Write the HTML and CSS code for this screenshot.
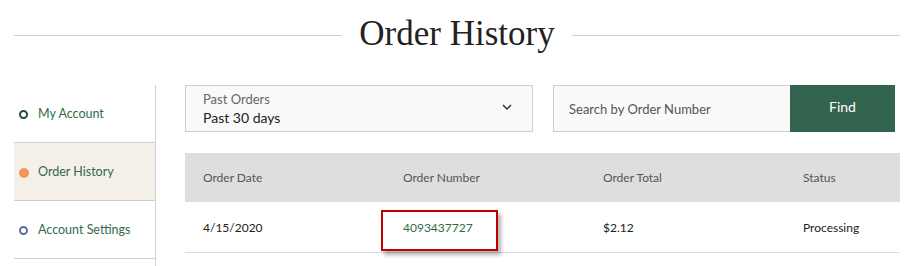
FILE: index.html
```html
<!DOCTYPE html>
<html lang="en">
<head>
<meta charset="utf-8">
<title>Order History</title>
<link rel="stylesheet" href="styles.css">
</head>
<body>
<div class="page">
  <header class="title-row">
    <span class="rule"></span>
    <h1 class="title">Order History</h1>
    <span class="rule"></span>
  </header>
  <div class="main">
    <nav class="sidebar">
      <a class="nav-item" href="#"><span class="dot dot-account"></span>My Account</a>
      <a class="nav-item active" href="#"><span class="dot dot-history"></span>Order History</a>
      <a class="nav-item" href="#"><span class="dot dot-settings"></span>Account Settings</a>
    </nav>
    <section class="content">
      <div class="controls">
        <div class="select">
          <div class="select-text">
            <span class="select-label">Past Orders</span>
            <span class="select-value">Past 30 days</span>
          </div>
          <svg class="chevron" width="10" height="6" viewBox="0 0 10 6"><path d="M1 1 L5 5 L9 1" fill="none" stroke="#333" stroke-width="1.5"/></svg>
        </div>
        <div class="search">
          <span class="search-input">Search by Order Number</span>
          <button class="find">Find</button>
        </div>
      </div>
      <div class="table">
        <div class="thead">
          <div class="cell c1">Order Date</div>
          <div class="cell c2">Order Number</div>
          <div class="cell c3">Order Total</div>
          <div class="cell c4">Status</div>
        </div>
        <div class="trow">
          <div class="cell c1">4/15/2020</div>
          <div class="cell c2"><span class="highlight"><a class="order-link" href="#">4093437727</a></span></div>
          <div class="cell c3">$2.12</div>
          <div class="cell c4">Processing</div>
        </div>
      </div>
    </section>
  </div>
</div>
</body>
</html>
```
FILE: styles.css
```css
* { box-sizing: border-box; }
html, body { margin: 0; padding: 0; background: #fff; }
body { font-family: Lato, "Open Sans", sans-serif; color: #222; }
.page { padding: 0 12px 0 14px; width: 912px; height: 266px; overflow: hidden; }

.title-row { display: flex; align-items: center; gap: 17px; height: 70px; }
.rule { flex: 1; height: 1px; background: #cfcfcf; }
.title { margin: 0; font-family: "Liberation Serif", "Times New Roman", serif; font-weight: normal; font-size: 35px; line-height: 1; color: #222; position: relative; top: -2px; }

.main { display: flex; margin-top: 15px; }
.sidebar { width: 142px; border-right: 1px solid #cfcfcf; min-height: 190px; display: flex; flex-direction: column; }
.nav-item { display: flex; align-items: center; height: 58px; border-bottom: 1px solid #cfcfcf; padding-left: 5px; font-size: 12.5px; color: #2f6b49; text-decoration: none; }
.nav-item.active { background: #f5f1ea; }
.dot { width: 9px; height: 9px; border-radius: 50%; margin-right: 10px; margin-top: 2px; flex: none; }
.dot-account { border: 2px solid #23503a; }
.dot-history { background: #f4945a; width: 10px; height: 10px; margin-right: 9px; }
.dot-settings { border: 2px solid #5c6d9e; }

.content { flex: 1; margin-left: 29px; }
.controls { display: flex; height: 47px; gap: 20px; }
.select { width: 348px; height: 47px; border: 1px solid #cfcfcf; background: #f9f9f9; display: flex; align-items: center; justify-content: space-between; padding: 0 20px 0 17px; }
.select-text { display: flex; flex-direction: column; padding-top: 2px; }
.select-label { font-size: 13px; color: #666; line-height: 17px; }
.select-value { font-size: 14px; color: #222; line-height: 20px; }
.chevron { display: block; margin-top: -4px; }
.search { display: flex; }
.search-input { width: 237px; height: 47px; border: 1px solid #cfcfcf; border-right: none; background: #f9f9f9; display: flex; align-items: center; padding-left: 15px; font-size: 13px; color: #555; }
.find { width: 105px; height: 47px; border: none; background: #336450; color: #fff; font-family: Lato, sans-serif; font-size: 14px; padding: 0 0 4px; }

.table { margin-top: 21px; }
.thead { display: flex; height: 49px; background: #dedede; align-items: center; font-size: 12px; color: #555; }
.trow { display: flex; height: 51px; align-items: center; border-bottom: 1px solid #dddddd; font-size: 12px; color: #222; }
.cell { padding-left: 18px; }
.c1, .c2, .c3 { width: 200px; }
.c4 { flex: 1; }
.order-link { color: #2f6b49; text-decoration: none; }
.highlight { position: relative; display: inline-block; }
.highlight::after { content: ""; position: absolute; left: -22px; top: -10px; width: 113px; height: 37px; border: 2px solid #c00000; box-shadow: 3px 4px 4px rgba(0,0,0,0.3); }
```
